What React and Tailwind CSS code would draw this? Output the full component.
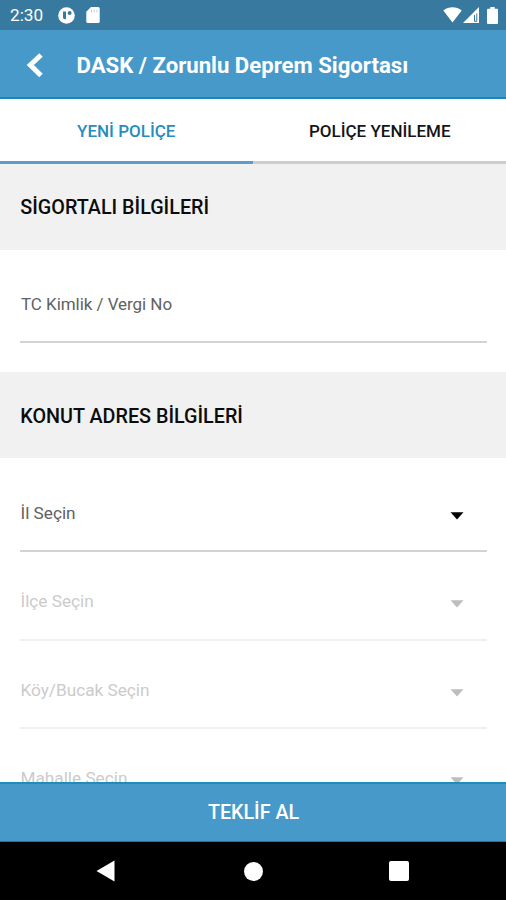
function StatusBar() {
  return (
    <div className="flex h-[30px] shrink-0 items-center bg-[#387a9f] pl-[10px] pr-[8px] text-white">
      <span className="w-[48px] pt-[2px] text-[17.2px] leading-none">2:30</span>
      <svg className="h-[17px] w-[17px]" viewBox="0 0 17 17">
        <circle cx="8.5" cy="8.5" r="8.3" fill="#fff" />
        <path d="M5 4.500h3v7.700H6.800A1.800 1.800 0 0 1 5 10.400z" fill="#387a9f" />
        <circle cx="11.600" cy="6" r="2" fill="#387a9f" />
      </svg>
      <svg className="ml-[11px] h-[16px] w-[14px]" viewBox="0 0 14 16">
        <path d="M5 0h7.2A1.5 1.5 0 0 1 13.700 1.500v13A1.500 1.500 0 0 1 12.200 16H1.800A1.500 1.500 0 0 1 .3 14.500V4.800z" fill="#fff" />
        <path d="M5.500 2.700v2.600M8.200 2.700v2.600M10.900 2.700v2.600" stroke="#387a9f" strokeWidth="1" opacity=".35" />
      </svg>
      <div className="ml-auto flex items-center">
        <svg className="h-[16px] w-[19px]" viewBox="0 0 19 16">
          <path d="M.3 3.400C5.800-.7 13.200-.7 18.700 3.400L9.500 15.600z" fill="#fff" />
        </svg>
        <svg className="ml-[1px] h-[16px] w-[16px]" viewBox="0 0 16 16">
          <path d="M0 16L16 0v16z" fill="#fff" />
          <path d="M11.500 8v6.300h2.300V6.500" fill="none" stroke="#387a9f" strokeWidth="1" />
        </svg>
        <svg className="ml-[8px] h-[17px] w-[11px]" viewBox="0 0 11 17">
          <path d="M3.300 0h4.400v1.700H10a1 1 0 0 1 1 1V16a1 1 0 0 1-1 1H1a1 1 0 0 1-1-1V2.700a1 1 0 0 1 1-1h2.300z" fill="#fff" />
        </svg>
      </div>
    </div>
  );
}

function SectionTitle({ children }) {
  return (
    <h2 className="flex h-[86px] shrink-0 items-center bg-[#f1f1f1] pl-[20.300px] pt-[3px] text-[19.750px] font-medium leading-none text-[#0c0c0c]">
      {children}
    </h2>
  );
}

function SelectRow({ label, disabled }) {
  return (
    <div
      className={
        disabled
          ? "ml-[20px] mr-[19px] flex h-[88.500px] shrink-0 items-center justify-between border-b-2 border-[#efefef] pr-[23px] pt-[13px] text-[#cbcbcb]"
          : "ml-[20px] mr-[19px] flex h-[94px] shrink-0 items-center justify-between border-b-2 border-[#d3d3d3] pr-[23px] pt-[18px] text-[#616161]"
      }
    >
      <span className={disabled ? "pl-[0.500px] text-[17.200px] leading-none" : "pl-[0.500px] pt-[1px] text-[17.200px] leading-none"}>
        {label}
      </span>
      <svg className="mt-[5px] h-[8px] w-[14px]" viewBox="0 0 14 8">
        <path d="M.5.300h13L7 7.600z" fill={disabled ? "#bdbdbd" : "#000"} />
      </svg>
    </div>
  );
}

export default function App() {
  return (
    <div className="flex h-[900px] w-[506px] flex-col overflow-hidden bg-white font-['Roboto',sans-serif]">
      <StatusBar />
      <header className="flex h-[69px] shrink-0 items-center border-b-2 border-[#1c87b7] bg-[#4799c9] text-white">
        <svg className="ml-[26px] mt-[2px] h-[28px] w-[18px]" viewBox="0 0 18 28">
          <path d="M15 4L4.300 14L15 24.500" fill="none" stroke="#fff" strokeWidth="5" />
        </svg>
        <h1 className="ml-[32.500px] mt-[4px] text-[22.150px] font-bold leading-none">DASK / Zorunlu Deprem Sigortası</h1>
      </header>
      <div className="flex h-[64.500px] shrink-0 text-[17px] font-medium leading-none">
        <div className="flex flex-1 items-center justify-center border-b-[3px] border-[#5c9dcc] pt-[3px] text-[#278dbc]">YENİ POLİÇE</div>
        <div className="flex flex-1 items-center justify-center border-b-[3px] border-[#cdcdcd] pl-[1px] pt-[3px] text-[#151515]">POLİÇE YENİLEME</div>
      </div>
      <main className="flex min-h-0 flex-1 flex-col overflow-hidden">
        <SectionTitle>SİGORTALI BİLGİLERİ</SectionTitle>
        <div className="h-[122.500px] shrink-0 pl-[20px] pr-[19px]">
          <div className="flex h-[93.500px] items-center border-b-2 border-[#d3d3d3] pl-[1px] pt-[18px] text-[17px] leading-none tracking-[-0.050px] text-[#616161]">
            TC Kimlik / Vergi No
          </div>
        </div>
        <SectionTitle>KONUT ADRES BİLGİLERİ</SectionTitle>
        <SelectRow label="İl Seçin" />
        <SelectRow label="İlçe Seçin" disabled />
        <SelectRow label="Köy/Bucak Seçin" disabled />
        <SelectRow label="Mahalle Seçin" disabled />
      </main>
      <button className="h-[60px] shrink-0 border-b border-t-2 border-b-[#386f91] border-t-[#1f8cba] bg-[#4799c9] pl-[1px] pt-[1px] text-[19.700px] font-medium leading-none text-white">
        TEKLİF AL
      </button>
      <nav className="flex h-[58px] shrink-0 items-center bg-black">
        <svg className="ml-[96px] h-[22px] w-[19px]" viewBox="0 0 19 22">
          <path d="M.5 11L18.500.500v21z" fill="#fff" />
        </svg>
        <div className="ml-[129px] h-[19px] w-[19px] rounded-full bg-white" />
        <div className="ml-[126px] h-[20px] w-[20px] rounded-[2px] bg-white" />
      </nav>
    </div>
  );
}
